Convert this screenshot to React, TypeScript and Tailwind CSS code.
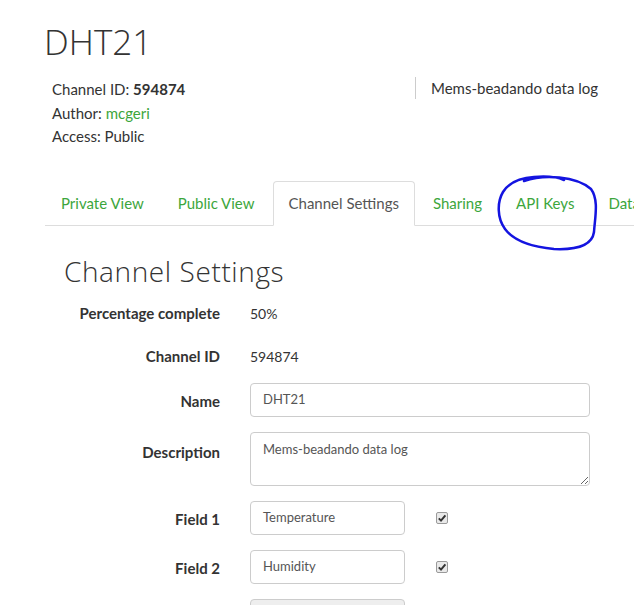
import React from "react";

const tabs = ["Private View", "Public View", "Channel Settings", "Sharing", "API Keys", "Data Import / Export"];

function Check() {
  return (
    <span className="inline-flex h-[12px] w-[12px] items-center justify-center rounded-[2px] border border-[#9a9a9a] bg-[#e9e9e9]">
      <svg width="10" height="10" viewBox="0 0 10 10">
        <path d="M1.8 5.4 L4 7.6 L8.4 2.4" fill="none" stroke="#333" strokeWidth="2" />
      </svg>
    </span>
  );
}

export default function App() {
  const sans = { fontFamily: "Lato, 'Open Sans', sans-serif" };
  const head = { fontFamily: "'Open Sans', Lato, sans-serif" };

  return (
    <div className="relative h-[605px] w-[634px] overflow-hidden bg-white text-[#333]" style={sans}>
      <div className="pl-[46px] pt-[20px]">
        <h1 className="ml-[-2px] text-[35px] font-light leading-[44px]" style={head}>
          DHT21
        </h1>

        <div className="mt-[14px] flex text-[15px] leading-[23.5px]">
          <div className="w-[369px] pl-[6px]">
            <div>
              Channel ID: <span className="font-bold">594874</span>
            </div>
            <div>
              Author: <span className="text-[#3ca63c]">mcgeri</span>
            </div>
            <div>Access: Public</div>
          </div>
          <div className="mt-[-1px] h-[22px] border-l border-[#ccc] pl-[15px]">Mems-beadando data log</div>
        </div>

        <ul className="mt-[32px] ml-[-1px] flex border-b border-[#ddd] text-[15px]">
          {tabs.map((t) => {
            const active = t === "Channel Settings";
            return (
              <li
                key={t}
                className={
                  active
                    ? "mb-[-1px] mr-[2px] whitespace-nowrap rounded-t-[4px] border border-b-white border-[#ddd] bg-white px-[15px] py-[11px] leading-[20px] text-[#555]"
                    : "mr-[2px] whitespace-nowrap border border-transparent px-[15px] py-[11px] leading-[20px] text-[#3ca63c]"
                }
              >
                {t}
              </li>
            );
          })}
        </ul>

        <h2 className="mt-[27px] pl-[18px] text-[28px] font-light leading-[36px] tracking-[0.6px]" style={head}>
          Channel Settings
        </h2>

        <div className="mt-[11px] text-[14px]">
          <div className="flex h-[28px] items-center">
            <div className="w-[174px] text-right text-[15px] font-bold">Percentage complete</div>
            <div className="pl-[30px]">50%</div>
          </div>
          <div className="mt-[15px] flex h-[28px] items-center">
            <div className="w-[174px] text-right text-[15px] font-bold">Channel ID</div>
            <div className="pl-[30px]">594874</div>
          </div>
          <div className="mt-[12px] flex items-center">
            <div className="w-[174px] pt-[3px] text-right text-[15px] font-bold">Name</div>
            <div className="pl-[30px]">
              <div className="flex h-[34px] w-[340px] items-center rounded-[4px] border border-[#ccc] px-[12px] text-[13px] text-[#555]">
                DHT21
              </div>
            </div>
          </div>
          <div className="mt-[15px] flex">
            <div className="w-[174px] pt-[9px] text-right text-[15px] font-bold">Description</div>
            <div className="pl-[30px]">
              <textarea
                defaultValue="Mems-beadando data log"
                className="block h-[54px] w-[340px] rounded-[4px] border border-[#ccc] px-[12px] py-[7px] text-[13px] text-[#555] outline-none"
                style={sans}
              />
            </div>
          </div>
          {["Temperature", "Humidity"].map((f, i) => (
            <div key={f} className="mt-[15px] flex items-center">
              <div className="w-[174px] pt-[3px] text-right text-[15px] font-bold">Field {i + 1}</div>
              <div className="flex items-center pl-[30px]">
                <div className="flex h-[34px] w-[155px] items-center rounded-[4px] border border-[#ccc] px-[12px] text-[13px] text-[#555]">
                  {f}
                </div>
                <div className="ml-[31px]">
                  <Check />
                </div>
              </div>
            </div>
          ))}
          <div className="mt-[15px] flex items-center">
            <div className="w-[174px]" />
            <div className="pl-[30px]">
              <div className="h-[34px] w-[155px] rounded-[4px] border border-[#ccc] bg-[#eee]" />
            </div>
          </div>
        </div>
      </div>

      <svg className="absolute left-[494px] top-[172px]" width="110" height="82" viewBox="0 0 110 82">
        <path
          d="M30 9 C50 2, 82 4, 97 17 C105 28, 101 45, 100 60 C98 74, 82 78, 60 77 C40 75, 20 69, 11 57 C3 46, 3 30, 9 20 C15 10, 27 6, 40 5 C52 4, 63 5, 70 8"
          fill="none"
          stroke="#1414e0"
          strokeWidth="2.5"
          strokeLinecap="round"
        />
      </svg>
    </div>
  );
}
